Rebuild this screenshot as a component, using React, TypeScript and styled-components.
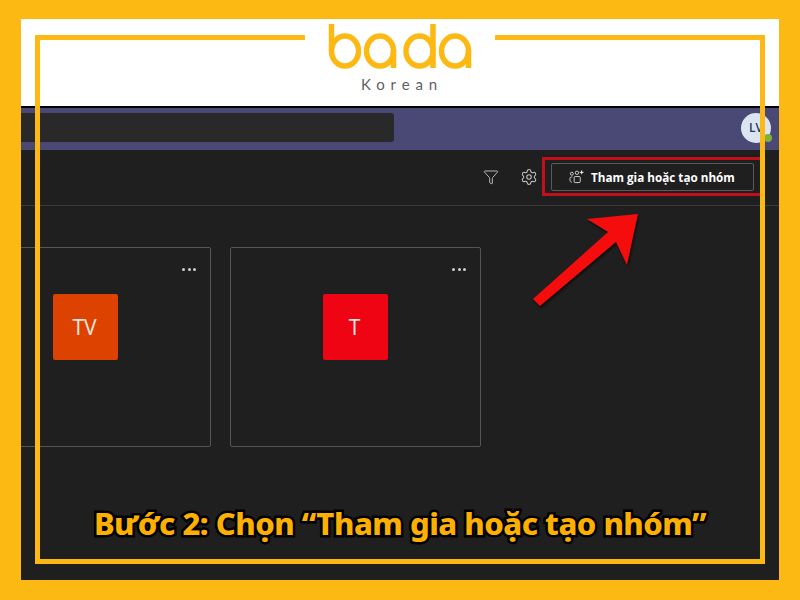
import React from "react";
import styled, { createGlobalStyle } from "styled-components";
import { Funnel, Settings } from "lucide-react";

const Y = "#fdb913";

const Global = createGlobalStyle`
  html, body { margin: 0; padding: 0; background: ${Y}; }
  #root { width: 800px; height: 600px; overflow: hidden; }
`;

const Page = styled.div`
  position: relative;
  box-sizing: border-box;
  width: 800px;
  height: 600px;
  padding: 19px 21px 20px;
  background: ${Y};
  display: flex;
  flex-direction: column;
  font-family: "Open Sans", "Noto Sans", sans-serif;
`;

const Header = styled.header`
  height: 87px;
  background: #fff;
  display: flex;
  justify-content: center;
`;

const LogoBlock = styled.div`
  position: relative;
  z-index: 2;
  width: 190px;
  height: 80px;
  padding-top: 4px;
  box-sizing: border-box;
  background: #fff;
  display: flex;
  flex-direction: column;
  align-items: center;
`;

const LogoMark = styled.svg`
  display: block;
  width: 145px;
  height: 46px;
`;

const LogoWord = styled.div`
  margin-top: 6px;
  padding-left: 4px;
  font: 400 15px/18px "Lato", "Open Sans", sans-serif;
  letter-spacing: 5.9px;
  color: #5f5f5f;
`;

const TopBar = styled.div`
  box-sizing: border-box;
  border-top: 2px solid #000;
  height: 44px;
  background: #4a4976;
  display: flex;
  align-items: flex-start;
  justify-content: space-between;
  padding: 5px 8px 0 0;
`;

const Search = styled.div`
  width: 373px;
  height: 29px;
  background: #292929;
  border-radius: 0 3px 3px 0;
`;

const Avatar = styled.div`
  position: relative;
  width: 30px;
  height: 30px;
  border-radius: 50%;
  background: #dbe5f1;
  color: #26375f;
  font-size: 12px;
  font-weight: 600;
  line-height: 30px;
  text-align: center;
`;

const StatusDot = styled.span`
  position: absolute;
  right: -1px;
  bottom: 1px;
  width: 8px;
  height: 8px;
  border-radius: 50%;
  background: #7fb13c;
`;

const Main = styled.main`
  flex: 1;
  background: #1f1f1f;
  display: flex;
  flex-direction: column;
  overflow: hidden;
`;

const Toolbar = styled.div`
  box-sizing: border-box;
  height: 56px;
  padding: 0 17px 2px 0;
  border-bottom: 1px solid #3b3b3b;
  display: flex;
  align-items: center;
  justify-content: flex-end;
  color: #c4c4c4;
`;

const ToolIcon = styled.span<{ $gap: number }>`
  display: flex;
  margin-right: ${(p) => p.$gap}px;
`;

const Highlight = styled.div`
  box-sizing: border-box;
  height: 39px;
  width: 220px;
  border: 3px solid #c10f1c;
  border-right-width: 0;
  padding: 0 8px 0 6px;
  display: flex;
  align-items: center;
`;

const JoinButton = styled.div`
  box-sizing: border-box;
  width: 203px;
  height: 28px;
  border: 1px solid #5a5a5a;
  border-radius: 2px;
  display: flex;
  align-items: center;
  padding-left: 17px;
  gap: 7px;
  color: #fff;
  font-size: 11.7px;
  font-weight: 700;
  white-space: nowrap;
`;

const Cards = styled.div`
  display: flex;
  gap: 19px;
  margin: 41px 0 0 -61px;
`;

const Card = styled.div`
  position: relative;
  box-sizing: border-box;
  width: 251px;
  height: 200px;
  flex: none;
  border: 1px solid #555;
  border-radius: 2px;
  display: flex;
  justify-content: center;
  padding-top: 46px;
`;

const Dots = styled.div`
  position: absolute;
  top: 20px;
  right: 14px;
  display: flex;
  gap: 2.5px;
`;

const Dot = styled.i`
  width: 3px;
  height: 3px;
  border-radius: 50%;
  background: #d0d0d0;
`;

const Tile = styled.div<{ $bg: string }>`
  width: 65px;
  height: 66px;
  padding-right: 2px;
  box-sizing: border-box;
  border-radius: 2px;
  background: ${(p) => p.$bg};
  color: #f6e6e0;
  font-size: 21px;
  line-height: 66px;
  text-align: center;
`;

const Caption = styled.div`
  position: relative;
  z-index: 2;
  margin-top: 54px;
  text-align: center;
  font: 800 31px/44px "Noto Sans", sans-serif;
  color: #fdb000;
  -webkit-text-stroke: 5px #000;
  paint-order: stroke fill;
  white-space: nowrap;
  letter-spacing: -0.5px;
`;

const Frame = styled.div`
  position: absolute;
  z-index: 1;
  left: 35px;
  top: 35px;
  width: 730px;
  height: 529px;
  box-sizing: border-box;
  border: 5px solid ${Y};
  pointer-events: none;
`;

const Arrow = styled.svg`
  position: absolute;
  left: 525px;
  top: 205px;
  width: 125px;
  height: 110px;
  filter: drop-shadow(1px 2px 1px rgba(0, 0, 0, 0.6));
`;

const TeamIcon = () => (
  <svg width="15" height="14" viewBox="0 0 16 15" fill="none" stroke="#d8d8d8" strokeWidth="1">
    <circle cx="3" cy="4" r="1.6" />
    <circle cx="8.5" cy="3" r="1.8" />
    <path d="M3.5 7.5H2.4C1.6 7.5 1 8.1 1 8.9v2.2c0 1 .8 1.9 2 1.9" />
    <rect x="5.5" y="7" width="6.5" height="6.5" rx="1" />
    <path d="M13.5 0.5v4M11.5 2.5h4" stroke="#fff" />
  </svg>
);

const Logo = () => (
  <LogoMark viewBox="0 0 145 46" fill="none" stroke={Y} strokeWidth="5.5">
    <ellipse cx="17" cy="28" rx="13.5" ry="15" />
    <path d="M3.5 1V28" />
    <ellipse cx="52" cy="28" rx="13.5" ry="15" />
    <path d="M65.5 27V45" />
    <ellipse cx="91.5" cy="28" rx="13.5" ry="15" />
    <path d="M105 1V45" />
    <ellipse cx="127" cy="28" rx="13.5" ry="15" />
    <path d="M140.5 27V45" />
  </LogoMark>
);

const More = () => (
  <Dots>
    <Dot />
    <Dot />
    <Dot />
  </Dots>
);

export default function App() {
  return (
    <Page>
      <Global />
      <Header>
        <LogoBlock>
          <Logo />
          <LogoWord>Korean</LogoWord>
        </LogoBlock>
      </Header>
      <TopBar>
        <Search />
        <Avatar>
          LV
          <StatusDot />
        </Avatar>
      </TopBar>
      <Main>
        <Toolbar>
          <ToolIcon $gap={21}>
            <Funnel size={16} strokeWidth={1.4} />
          </ToolIcon>
          <ToolIcon $gap={4}>
            <Settings size={18} strokeWidth={1.4} />
          </ToolIcon>
          <Highlight>
            <JoinButton>
              <TeamIcon />
              Tham gia hoặc tạo nhóm
            </JoinButton>
          </Highlight>
        </Toolbar>
        <Cards>
          <Card>
            <More />
            <Tile $bg="#dd4200">TV</Tile>
          </Card>
          <Card>
            <More />
            <Tile $bg="#ee0412">T</Tile>
          </Card>
        </Cards>
        <Caption>Bước 2: Chọn “Tham gia hoặc tạo nhóm”</Caption>
      </Main>
      <Frame />
      <Arrow viewBox="0 0 125 110">
        <path d="M113 9 L62 14 L83 27 L8 94 L15 101 L91 37 L102 60 Z" fill="#f50d0d" />
      </Arrow>
    </Page>
  );
}
